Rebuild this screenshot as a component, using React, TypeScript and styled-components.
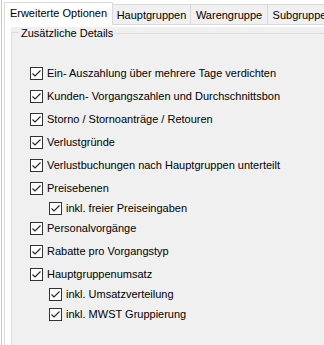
import { FC } from "react";
import styled, { createGlobalStyle } from "styled-components";

const GlobalStyle = createGlobalStyle`
  html, body {
    margin: 0;
    padding: 0;
    background: #ffffff;
  }
  body {
    font-family: "Liberation Sans", Arial, sans-serif;
    font-size: 11px;
    color: #000000;
  }
`;

const Frame = styled.div`
  width: 324px;
  height: 345px;
  overflow: hidden;
  display: flex;
  padding-left: 1px;
  box-sizing: border-box;
  background: #ffffff;
`;

const OuterPanel = styled.div`
  flex: 1;
  min-width: 0;
  display: flex;
  border-left: 1px solid #c6c6c6;
  padding-left: 2px;
`;

const TabControl = styled.div`
  flex: 1;
  min-width: 0;
  display: flex;
  flex-direction: column;
`;

const TabStrip = styled.div`
  height: 24px;
  flex-shrink: 0;
  display: flex;
  align-items: flex-end;
`;

const Tab = styled.div<{ $active?: boolean; $w: number }>`
  flex-shrink: 0;
  box-sizing: border-box;
  width: ${(p) => p.$w}px;
  height: ${(p) => (p.$active ? 23 : 20)}px;
  margin-bottom: ${(p) => (p.$active ? -1 : 0)}px;
  position: relative;
  z-index: ${(p) => (p.$active ? 1 : 0)};
  display: flex;
  align-items: center;
  justify-content: center;
  padding-bottom: ${(p) => (p.$active ? 1 : 0)}px;
  padding-top: ${(p) => (p.$active ? 0 : 1)}px;
  background: ${(p) => (p.$active ? "#ffffff" : "#f0f0f0")};
  border-top: 1px solid #d9d9d9;
  border-right: 1px solid #d9d9d9;
  border-left: ${(p) => (p.$active ? "1px solid #d9d9d9" : "none")};
  line-height: 13px;
  white-space: nowrap;
`;

const TabPage = styled.div`
  flex: 1;
  min-height: 0;
  display: flex;
  background: #ffffff;
  border-top: 1px solid #d9d9d9;
  border-left: 1px solid #d9d9d9;
  padding: 2px 0 0 6px;
`;

const GroupBox = styled.div`
  flex: 1;
  display: flex;
  flex-direction: column;
  background: #f0f0f0;
`;

const GroupHeader = styled.div`
  height: 13px;
  display: flex;
  align-items: center;
`;

const HeaderStub = styled.div`
  align-self: flex-end;
  width: 7px;
  height: 7px;
  border-top: 1px solid #dcdcdc;
  border-left: 1px solid #dcdcdc;
`;

const GroupTitle = styled.div`
  padding: 0 2px;
  line-height: 13px;
  white-space: nowrap;
`;

const HeaderLine = styled.div`
  flex: 1;
  height: 0;
  border-top: 1px solid #dcdcdc;
`;

const GroupBody = styled.div`
  flex: 1;
  display: flex;
  flex-direction: column;
  border-left: 1px solid #dcdcdc;
  padding: 27px 0 0 18px;
`;

const Row = styled.div<{ $sub?: boolean; $gap: number }>`
  display: flex;
  align-items: center;
  height: 13px;
  margin-top: ${(p) => p.$gap}px;
  margin-left: ${(p) => (p.$sub ? 19 : 0)}px;
`;

const Box = styled.div`
  width: 13px;
  height: 13px;
  flex-shrink: 0;
  box-sizing: border-box;
  border: 1px solid #333333;
  background: #ffffff;
  display: flex;
`;

const Label = styled.span`
  margin-left: 4px;
  line-height: 13px;
  white-space: nowrap;
`;

interface Option {
  label: string;
  sub?: boolean;
}

const options: Option[] = [
  { label: "Ein- Auszahlung über mehrere Tage verdichten" },
  { label: "Kunden- Vorgangszahlen und Durchschnittsbon" },
  { label: "Storno / Stornoanträge / Retouren" },
  { label: "Verlustgründe" },
  { label: "Verlustbuchungen nach Hauptgruppen unterteilt" },
  { label: "Preisebenen" },
  { label: "inkl. freier Preiseingaben", sub: true },
  { label: "Personalvorgänge" },
  { label: "Rabatte pro Vorgangstyp" },
  { label: "Hauptgruppenumsatz" },
  { label: "inkl. Umsatzverteilung", sub: true },
  { label: "inkl. MWST Gruppierung", sub: true },
];

const tabs = [
  { title: "Erweiterte Optionen", width: 109 },
  { title: "Hauptgruppen", width: 78 },
  { title: "Warengruppe", width: 77 },
  { title: "Subgruppe", width: 64 },
];

const CheckBox: FC = () => (
  <Box>
    <svg width="11" height="11" viewBox="0 0 11 11">
      <path d="M1.5 5.5 L4 8 L9.5 2.5" fill="none" stroke="#222222" strokeWidth="1.1" />
    </svg>
  </Box>
);

const App: FC = () => {
  return (
    <>
      <GlobalStyle />
      <Frame>
        <OuterPanel>
          <TabControl>
            <TabStrip>
              {tabs.map((t, i) => (
                <Tab key={t.title} $active={i === 0} $w={t.width}>
                  {t.title}
                </Tab>
              ))}
            </TabStrip>
            <TabPage>
              <GroupBox>
                <GroupHeader>
                  <HeaderStub />
                  <GroupTitle>Zusätzliche Details</GroupTitle>
                  <HeaderLine />
                </GroupHeader>
                <GroupBody>
                  {options.map((o, i) => {
                    const prev = options[i - 1];
                    const gap = i === 0 ? 0 : o.sub || prev.sub ? 7 : 10;
                    return (
                      <Row key={o.label} $sub={o.sub} $gap={gap}>
                        <CheckBox />
                        <Label>{o.label}</Label>
                      </Row>
                    );
                  })}
                </GroupBody>
              </GroupBox>
            </TabPage>
          </TabControl>
        </OuterPanel>
      </Frame>
    </>
  );
};

export default App;
